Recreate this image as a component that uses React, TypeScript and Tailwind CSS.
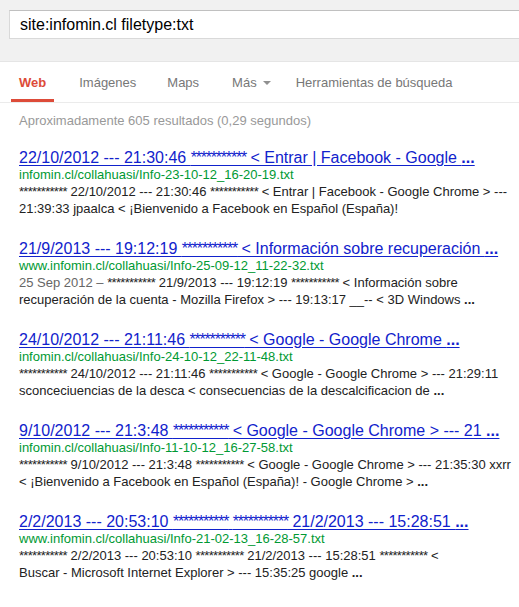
import React from "react";

const font = { fontFamily: '"Liberation Sans", Arial, sans-serif' };

function fmt(s: string, big: boolean): React.ReactNode[] {
  const parts = s.split(/(\*+|\.\.\.$)/);
  return parts.map((p, i) => {
    if (/^\*+$/.test(p))
      return (
        <span key={i} className={big ? "tracking-[-1.2px]" : "tracking-[-0.7px]"}>
          {p}
        </span>
      );
    if (p === "...")
      return (
        <b key={i} className="font-bold">
          ...
        </b>
      );
    return <React.Fragment key={i}>{p}</React.Fragment>;
  });
}

type R = { title: string; url: string; date?: string; lines: string[] };

const results: R[] = [
  {
    title: "22/10/2012 --- 21:30:46 *********** < Entrar | Facebook - Google ...",
    url: "infomin.cl/collahuasi/Info-23-10-12_16-20-19.txt",
    lines: [
      "*********** 22/10/2012 --- 21:30:46 *********** < Entrar | Facebook - Google Chrome > ---",
      "21:39:33 jpaalca < ¡Bienvenido a Facebook en Español (España)!",
    ],
  },
  {
    title: "21/9/2013 --- 19:12:19 *********** < Información sobre recuperación ...",
    url: "www.infomin.cl/collahuasi/Info-25-09-12_11-22-32.txt",
    date: "25 Sep 2012 – ",
    lines: [
      "*********** 21/9/2013 --- 19:12:19 *********** < Información sobre",
      "recuperación de la cuenta - Mozilla Firefox > --- 19:13:17 __-- < 3D Windows ...",
    ],
  },
  {
    title: "24/10/2012 --- 21:11:46 *********** < Google - Google Chrome ...",
    url: "infomin.cl/collahuasi/Info-24-10-12_22-11-48.txt",
    lines: [
      "*********** 24/10/2012 --- 21:11:46 *********** < Google - Google Chrome > --- 21:29:11",
      "sconceciuencias de la desca < consecuencias de la descalcificacion de ...",
    ],
  },
  {
    title: "9/10/2012 --- 21:3:48 *********** < Google - Google Chrome > --- 21 ...",
    url: "infomin.cl/collahuasi/Info-11-10-12_16-27-58.txt",
    lines: [
      "*********** 9/10/2012 --- 21:3:48 *********** < Google - Google Chrome > --- 21:35:30 xxrr",
      "< ¡Bienvenido a Facebook en Español (España)! - Google Chrome > ...",
    ],
  },
  {
    title: "2/2/2013 --- 20:53:10 *********** *********** 21/2/2013 --- 15:28:51 ...",
    url: "www.infomin.cl/collahuasi/Info-21-02-13_16-28-57.txt",
    lines: [
      "*********** 2/2/2013 --- 20:53:10 *********** 21/2/2013 --- 15:28:51 *********** <",
      "Buscar - Microsoft Internet Explorer > --- 15:35:25 google ...",
    ],
  },
];

function Tab({ label, active, ml, arrow }: { label: string; active?: boolean; ml: string; arrow?: boolean }) {
  return (
    <div
      className={`flex items-center px-2 pt-[4px] border-b-[3px] ${ml} ${
        active ? "border-[#dd4b39] text-[#dd4b39] font-bold" : "border-transparent text-[#777]"
      }`}
    >
      <span className="text-[13px] leading-[16px]">{label}</span>
      {arrow && (
        <span className="ml-[6px] inline-block w-0 h-0 border-l-[4px] border-r-[4px] border-t-[4px] border-l-transparent border-r-transparent border-t-[#909090]" />
      )}
    </div>
  );
}

export default function App() {
  return (
    <div className="w-[519px] h-[607px] bg-white overflow-hidden" style={font}>
      <div className="h-[62px] bg-[#f1f1f1] border-b border-[#e5e5e5] pt-[10px] pl-[9px]">
        <div className="h-[29px] bg-white border border-[#d9d9d9] border-t-[#c0c0c0] flex items-center pl-[10px] w-[560px]">
          <span className="text-[16px] text-black leading-[20px]">site:infomin.cl filetype:txt</span>
        </div>
      </div>
      <div className="h-[41px] border-b border-[#ebebeb] flex pl-[11px]">
        <Tab label="Web" active ml="ml-0" />
        <Tab label="Imágenes" ml="ml-[17px]" />
        <Tab label="Maps" ml="ml-[15px]" />
        <Tab label="Más" ml="ml-[17px]" arrow />
        <Tab label="Herramientas de búsqueda" ml="ml-[9px]" />
      </div>
      <div className="pl-[19px]">
        <div className="text-[13px] text-[#999] leading-[16px] mt-[10px]">
          Aproximadamente 605 resultados (0,29 segundos)
        </div>
        <div className="mt-[20px]">
          {results.map((r, i) => (
            <div key={i} className="mb-[23px] whitespace-nowrap">
              <div className="text-[16px] leading-[18px] text-[#1122cc] underline underline-offset-[2px]">
                {fmt(r.title, true)}
              </div>
              <div className="text-[13px] leading-[16px] text-[#009933]">{r.url}</div>
              {r.lines.map((l, j) => (
                <div key={j} className="text-[13px] leading-[17px] text-[#222]">
                  {j === 0 && r.date && <span className="text-[#666]">{r.date}</span>}
                  {fmt(l, false)}
                </div>
              ))}
            </div>
          ))}
        </div>
      </div>
    </div>
  );
}
